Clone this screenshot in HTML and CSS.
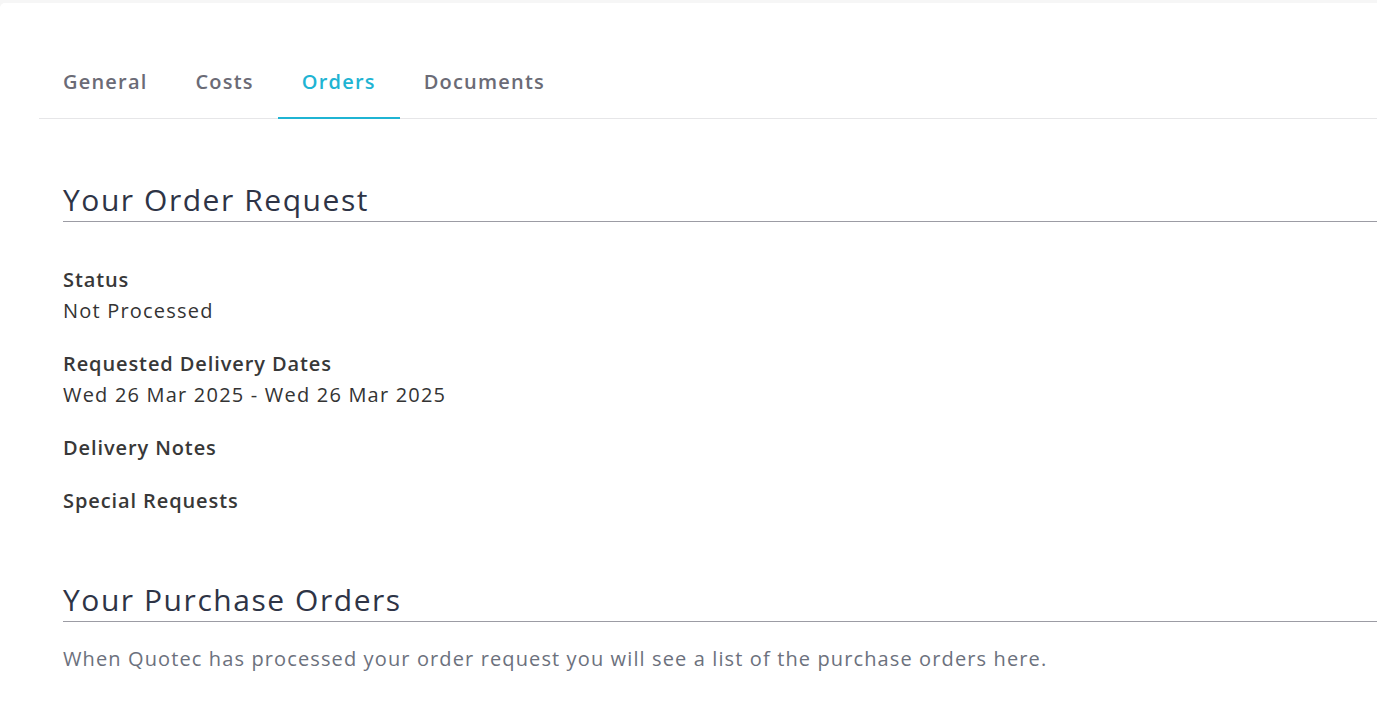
FILE: index.html
```html
<!DOCTYPE html>
<html lang="en">
<head>
<meta charset="utf-8">
<title>Order</title>
<link rel="stylesheet" href="styles.css">
</head>
<body>
  <div class="card">
    <nav class="tabs">
      <a class="tab">General</a>
      <a class="tab">Costs</a>
      <a class="tab active">Orders</a>
      <a class="tab">Documents</a>
    </nav>
    <main class="panel">
      <section class="block">
        <h2 class="block-title">Your Order Request</h2>
        <div class="fields">
          <div class="field">
            <div class="field-label">Status</div>
            <div class="field-value">Not Processed</div>
          </div>
          <div class="field">
            <div class="field-label">Requested Delivery Dates</div>
            <div class="field-value">Wed 26 Mar 2025 - Wed 26 Mar 2025</div>
          </div>
          <div class="field">
            <div class="field-label">Delivery Notes</div>
          </div>
          <div class="field">
            <div class="field-label">Special Requests</div>
          </div>
        </div>
      </section>
      <section class="block block-orders">
        <h2 class="block-title">Your Purchase Orders</h2>
        <p class="note">When Quotec has processed your order request you will see a list of the purchase orders here.</p>
      </section>
    </main>
  </div>
</body>
</html>
```
FILE: styles.css
```css
html, body {
  margin: 0;
  padding: 0;
}

body {
  background: #f6f6f6;
  font-family: "Open Sans", "DejaVu Sans", sans-serif;
  color: #333333;
  overflow: hidden;
  height: 705px;
}

.card {
  margin-top: 3px;
  background: #ffffff;
  border-top-left-radius: 5px;
  padding: 65px 0 0 39px;
  height: 702px;
  box-sizing: border-box;
}

/* tab strip */
.tabs {
  display: flex;
  border-bottom: 1px solid #e6e6e8;
}

.tab {
  padding: 0 24px 21px;
  margin-bottom: -1px;
  border-bottom: 2px solid transparent;
  font-size: 20px;
  line-height: 28px;
  font-weight: 600;
  color: #6b6b76;
  letter-spacing: 1.2px;
  cursor: pointer;
}

.tab.active {
  color: #1fb4d3;
  border-bottom-color: #1fb4d3;
}

/* panel content */
.panel {
  padding: 63px 0 0 24px;
}

.block-title {
  margin: 0;
  padding-bottom: 3px;
  border-bottom: 1px solid #9c9ca4;
  font-size: 30px;
  line-height: 36px;
  font-weight: 400;
  color: #2e3446;
  letter-spacing: 1.55px;
}

.fields {
  display: flex;
  flex-direction: column;
  gap: 26px;
  padding-top: 44px;
}

.field {
  display: flex;
  flex-direction: column;
  gap: 4px;
}

.field-label {
  font-size: 20px;
  line-height: 27px;
  font-weight: 600;
  color: #383838;
  letter-spacing: 0.9px;
}

.field-value {
  font-size: 20px;
  line-height: 27px;
  font-weight: 400;
  color: #333333;
  letter-spacing: 1.2px;
}

.block-orders {
  margin-top: 68px;
}

.note {
  margin: 23px 0 0;
  font-size: 20px;
  line-height: 27px;
  color: #6c717d;
  letter-spacing: 1.12px;
}
```
